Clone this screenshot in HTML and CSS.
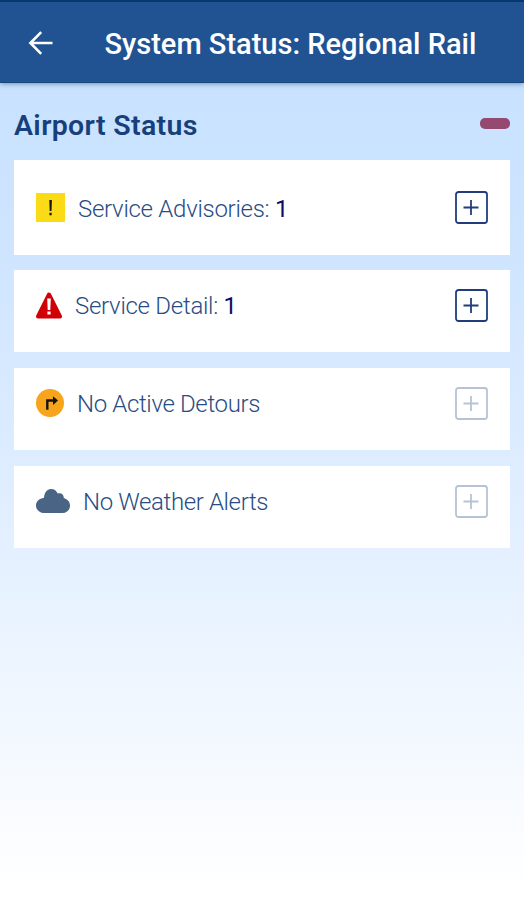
FILE: index.html
```html
<!DOCTYPE html>
<html lang="en">
<head>
<meta charset="utf-8">
<title>System Status: Regional Rail</title>
<link rel="stylesheet" href="styles.css">
</head>
<body>
<header class="topbar">
  <svg class="back" viewBox="0 0 26 26" width="26" height="26"><path d="M25.500 13H3M14.200 2.200 3.400 13l10.800 10.800"/></svg>
  <h1 class="title">System Status: Regional Rail</h1>
</header>
<main class="content">
  <div class="section-head">
    <h2 class="section-title">Airport Status</h2>
    <span class="dash"></span>
  </div>
  <section class="card card-tall">
    <svg class="icon" viewBox="0 0 29 29" width="29" height="29"><path fill="#fadb16" d="M0 0h29v29H0z"/><path fill="#17160e" d="M13.300 7h2.600l-.4 11h-1.800zM13.400 19.800h2.300v2.500h-2.300z"/></svg>
    <span class="label advisories">Service Advisories: <b class="count">1</b></span>
    <svg class="plus" viewBox="0 0 33 33" width="33" height="33"><rect x="1" y="1" width="31" height="31" rx="2.5"/><path d="M16 9v15M8.500 16.500h15"/></svg>
  </section>
  <section class="card">
    <svg class="icon" viewBox="0 0 26 27" width="26" height="27"><path fill="#d10007" stroke="#d10007" stroke-width="4" stroke-linejoin="round" d="M13 2.500 24 24.500H2z"/><path fill="#fff" d="M11.200 6.500h3.600L14.300 18h-2.600zM11.400 19.600h3.200v3h-3.200z"/></svg>
    <span class="label detail">Service Detail: <b class="count">1</b></span>
    <svg class="plus" viewBox="0 0 33 33" width="33" height="33"><rect x="1" y="1" width="31" height="31" rx="2.5"/><path d="M16 9v15M8.500 16.500h15"/></svg>
  </section>
  <section class="card">
    <svg class="icon raised" viewBox="0 0 28 28" width="28" height="28"><circle cx="14" cy="14" r="14" fill="#f6a51c"/><path fill="none" stroke="#17120a" stroke-width="2.400" d="M11.300 20.800v-9.300H18"/><path fill="#17120a" d="m17 7.300 5 4.200-5 4.400z"/></svg>
    <span class="label detours">No Active Detours</span>
    <svg class="plus muted" viewBox="0 0 33 33" width="33" height="33"><rect x="1" y="1" width="31" height="31" rx="2.5"/><path d="M16 9v15M8.500 16.500h15"/></svg>
  </section>
  <section class="card">
    <svg class="icon" viewBox="0 0 34 24" width="34" height="24"><path fill="#496485" d="M8 24C3.500 24 0 20.700 0 16.500 0 12.600 2.900 9.800 8 8.800 8.300 3.800 11 0 15 0c3.300 0 5.600 1.800 6.700 4.600 3.500-1.200 6.300 1 6.100 4.500C31.500 10.300 34 13 34 16.500c0 4.300-3 7.500-7.500 7.500z"/></svg>
    <span class="label weather">No Weather Alerts</span>
    <svg class="plus muted" viewBox="0 0 33 33" width="33" height="33"><rect x="1" y="1" width="31" height="31" rx="2.5"/><path d="M16 9v15M8.500 16.500h15"/></svg>
  </section>
</main>
</body>
</html>
```
FILE: styles.css
```css
* { box-sizing: border-box; }
body {
  margin: 0;
  min-height: 900px;
  font-family: Roboto, "Liberation Sans", sans-serif;
  background: linear-gradient(#c8e2ff 84px, #cfe5ff 260px, #e0eeff 500px, #fff 890px);
}
.topbar {
  display: flex;
  align-items: center;
  height: 83px;
  padding: 1px 0 0 27px;
  background: #215393;
  border-top: 2px solid #06386f;
  border-bottom: 1px solid #124781;
  box-shadow: 0 1px 5px rgba(50, 60, 100, .5);
}
.back {
  flex: none;
  fill: none;
  stroke: #fff;
  stroke-width: 2.6;
}
.title {
  margin: 2px 0 0 51.500px;
  font-size: 29px;
  font-weight: 500;
  line-height: 34px;
  color: #fff;
  white-space: nowrap;
}
.content { padding: 0 14px; }
.section-head {
  display: flex;
  align-items: center;
  justify-content: space-between;
  height: 76.500px;
  padding-top: 8px;
}
.section-title {
  margin: 2px 0 0;
  font-size: 28.500px;
  font-weight: 600;
  line-height: 34px;
  letter-spacing: .35px;
  color: #173f7b;
}
.dash {
  width: 30px;
  height: 11px;
  margin-top: -3px;
  border-radius: 5px;
  background: #964970;
}
.card {
  display: flex;
  align-items: center;
  height: 82px;
  margin-bottom: 15.800px;
  padding: 0 22px 11px;
  background: #fff;
}
.card-tall {
  height: 95px;
  padding-bottom: 0;
}
.icon { flex: none; }
.raised { margin-top: -2px; }
.label {
  margin-left: 13px;
  font-size: 24px;
  font-weight: 300;
  line-height: 30px;
  letter-spacing: -.27px;
  color: #294c83;
  white-space: nowrap;
}
.advisories { margin-top: 3px; }
.detail { margin-top: 1px; }
.detours { letter-spacing: -.35px; }
.weather {
  margin-top: 1px;
  letter-spacing: -.37px;
}
.count {
  font-weight: 400;
  color: #0d0c67;
}
.plus {
  flex: none;
  margin-left: auto;
  fill: none;
  stroke: #213d7d;
  stroke-width: 1.8;
}
.muted { stroke: #b7c2d7; }
```
